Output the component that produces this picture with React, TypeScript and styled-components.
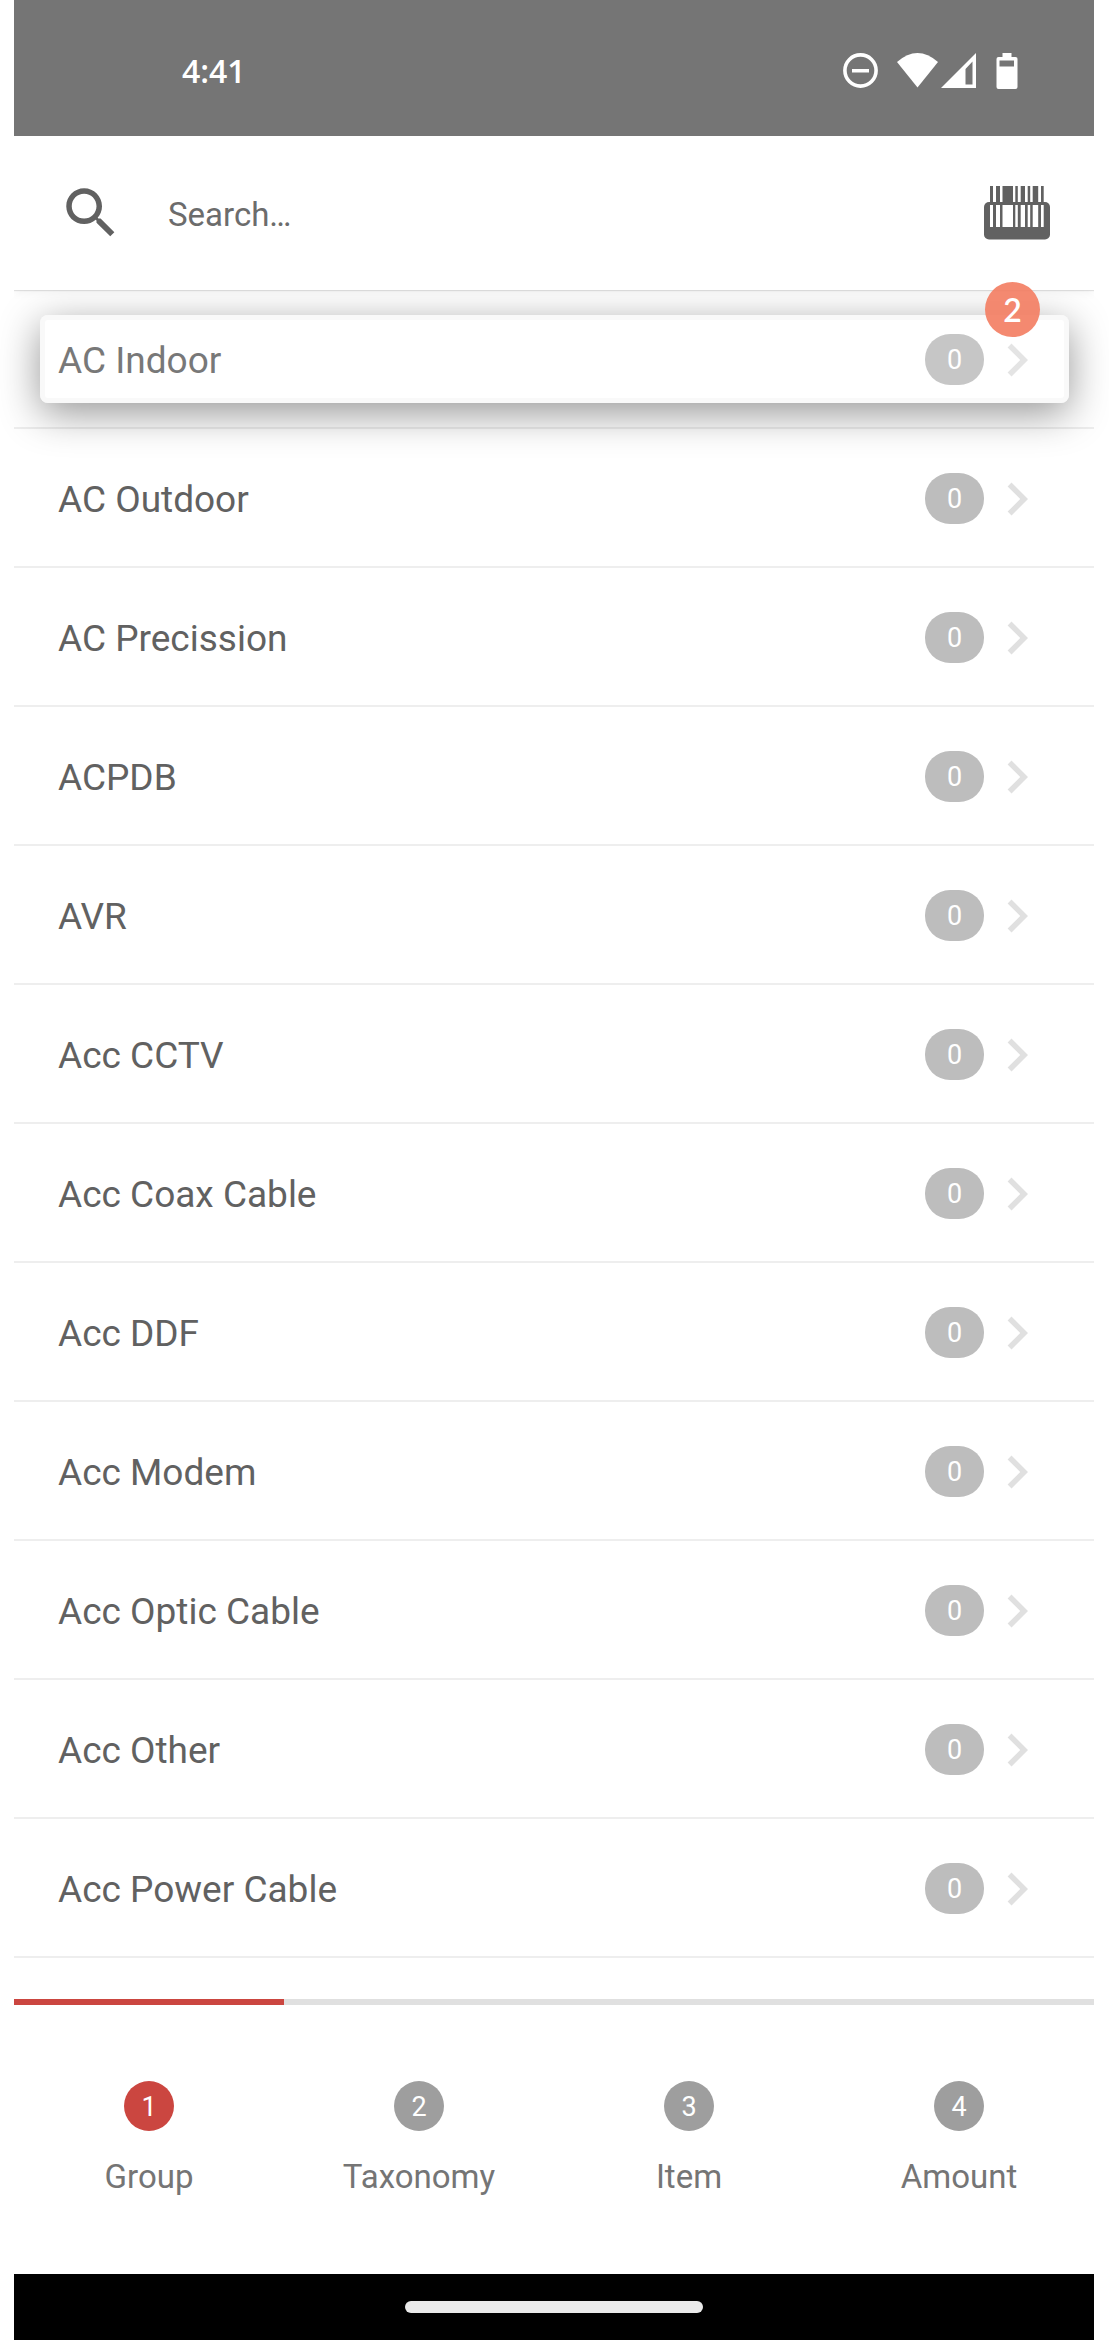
import React from "react";
import styled, { createGlobalStyle } from "styled-components";

const GlobalStyle = createGlobalStyle`
  * { box-sizing: border-box; }
  body { margin: 0; background: #fff; font-family: Roboto, sans-serif; }
  button, input { font: inherit; border: 0; background: none; padding: 0; margin: 0; }
  ul, ol { list-style: none; margin: 0; padding: 0; }
`;

const Screen = styled.div`
  display: flex;
  flex-direction: column;
  min-height: 100vh;
  margin: 0 15px 0 14px;
  background: #fff;
`;

const StatusBar = styled.header`
  display: flex;
  align-items: center;
  justify-content: space-between;
  height: 136px;
  padding: 5px 75px 0 168px;
  background: #757575;
  color: #fff;
`;

const Clock = styled.time`
  font: 600 32px/44px "Open Sans", sans-serif;
`;

const StatusIcons = styled.svg`
  display: block;
  width: 176px;
  height: 36px;
  fill: #fff;
`;

const SearchBar = styled.form`
  position: relative;
  z-index: 1;
  display: flex;
  align-items: center;
  height: 154px;
  padding: 0 44px;
  background: #fff;
  color: #616161;
  box-shadow: 0 1px 1px rgba(0, 0, 0, 0.1), 0 2px 10px rgba(0, 0, 0, 0.06);
  clip-path: inset(0 0 -16px 0);
`;

const Icon = styled.svg`
  display: block;
  flex: none;
  width: 66px;
  height: 66px;
  fill: currentColor;
`;

const SearchInput = styled.input`
  flex: 1;
  min-width: 0;
  margin-left: 44px;
  padding-top: 2px;
  height: 66px;
  font-size: 33px;
  color: #616161;
  outline: 0;
  &::placeholder { color: #6c6c6c; opacity: 1; }
`;

const IconButton = styled.button`
  color: #616161;
`;

const List = styled.ul`
  flex: 1;
`;

const Item = styled.li`
  position: relative;
  border-bottom: 2px solid #eee;
`;

const ItemButton = styled.button`
  display: flex;
  align-items: center;
  width: 100%;
  height: 137px;
  padding: 2px 44px 0;
  text-align: left;
`;

const ItemName = styled.span`
  flex: 1;
  padding-top: 2px;
  font-size: 37px;
  line-height: 44px;
  color: #616161;
`;

const Count = styled.span`
  width: 59px;
  height: 51px;
  padding-top: 1px;
  border-radius: 25px;
  background: #bdbdbd;
  color: #fff;
  font-size: 27px;
  line-height: 51px;
  text-align: center;
`;

const Chevron = styled(Icon)`
  color: #e0e0e0;
`;

const Highlight = styled.div`
  position: absolute;
  inset: 25px 25px 24px 26px;
  border: 5px solid rgba(245, 245, 245, 0.6);
  border-radius: 8px;
  background: rgba(255, 255, 255, 0.15);
  box-shadow: 0 10px 40px rgba(0, 0, 0, 0.42);
  pointer-events: none;
`;

const Marker = styled.span`
  position: absolute;
  z-index: 2;
  top: -8px;
  right: 54px;
  width: 55px;
  border-radius: 50%;
  background: rgba(243, 127, 100, 0.92);
  color: #fff;
  font: 600 32px/55px Lato, sans-serif;
  text-align: center;
`;

const Stepper = styled.footer`
  height: 275px;
`;

const Progress = styled.div`
  height: 6px;
  background: #e0e0e0;
`;

const ProgressFill = styled.div`
  height: 100%;
  background: #cb4640;
`;

const Steps = styled.ol`
  display: grid;
  grid-template-columns: repeat(4, 1fr);
  padding-top: 76px;
`;

const StepButton = styled.button`
  display: flex;
  flex-direction: column;
  align-items: center;
  gap: 26px;
  width: 100%;
  color: #757575;
  font-size: 33px;
  line-height: 40px;
`;

const StepNumber = styled.span<{ $active: boolean }>`
  width: 50px;
  height: 50px;
  padding-top: 1px;
  border-radius: 50%;
  background: ${(p) => (p.$active ? "#cb4640" : "#9e9e9e")};
  color: #fff;
  font-size: 27px;
  line-height: 50px;
  text-align: center;
`;

const GestureBar = styled.div`
  display: flex;
  align-items: center;
  justify-content: center;
  height: 66px;
  background: #000;
`;

const GestureHandle = styled.div`
  width: 298px;
  height: 12px;
  border-radius: 6px;
  background: #eaeaea;
`;

const groups = [
  "AC Indoor",
  "AC Outdoor",
  "AC Precission",
  "ACPDB",
  "AVR",
  "Acc CCTV",
  "Acc Coax Cable",
  "Acc DDF",
  "Acc Modem",
  "Acc Optic Cable",
  "Acc Other",
  "Acc Power Cable",
];

const steps = ["Group", "Taxonomy", "Item", "Amount"];
const currentStep = 1;

// Bars of the barcode as [x, width], repeated dark above the reader and light inside it.
const bars = [
  [6, 3],
  [12, 4],
  [18.5, 10.5],
  [31.3, 2.5],
  [36.7, 4.3],
  [43.7, 2.5],
  [48.7, 5.5],
  [57, 2.7],
];

export default function App() {
  return (
    <>
      <GlobalStyle />
      <Screen>
        <StatusBar>
          <Clock>4:41</Clock>
          <StatusIcons viewBox="0 0 176 36" aria-hidden="true">
            <circle cx="17.5" cy="17.5" r="15.6" fill="none" stroke="#fff" strokeWidth="3.6" />
            <rect x="9" y="16" width="17" height="3.5" />
            <path d="M54 9Q74.500-9 95 9L74.500 34.500Z" />
            <path fillRule="evenodd" d="M98 35L133 0V35ZM122.500 16V31.500H129.500V8.500Z" />
            <path fillRule="evenodd" d="M159.500 0h9v4h4q2 0 2 2v28q0 2-2 2h-17q-2 0-2-2v-28q0-2 2-2h4ZM156.500 7.500v6h14.500v-6Z" />
          </StatusIcons>
        </StatusBar>

        <SearchBar role="search" onSubmit={(e) => e.preventDefault()}>
          <Icon viewBox="0 0 24 24" aria-hidden="true">
            <path d="M15.500 14h-.79l-.28-.27C15.410 12.590 16 11.110 16 9.500 16 5.910 13.090 3 9.500 3S3 5.910 3 9.500 5.910 16 9.500 16c1.610 0 3.090-.59 4.230-1.570l.27.28v.79l5 4.990L20.490 19l-4.990-5zm-6 0C7.010 14 5 11.990 5 9.500S7.010 5 9.500 5 14 7.010 14 9.500 11.990 14 9.500 14z" />
          </Icon>
          <SearchInput type="text" aria-label="Search" placeholder="Search…" />
          <IconButton type="button" aria-label="Scan barcode">
            <Icon viewBox="0 0 66 66" aria-hidden="true">
              {bars.map(([x, w]) => (
                <rect key={x} x={x} y="6" width={w} height="18" />
              ))}
              <rect x="0" y="22" width="66" height="37.5" rx="5" />
              {bars.map(([x, w]) => (
                <rect key={x} x={x} y="25" width={w} height="22" fill="#fff" />
              ))}
            </Icon>
          </IconButton>
        </SearchBar>

        <List>
          {groups.map((name, i) => (
            <Item key={name}>
              <ItemButton type="button">
                <ItemName>{name}</ItemName>
                <Count>0</Count>
                <Chevron viewBox="0 0 24 24" aria-hidden="true">
                  <path d="M8.590 16.590L13.170 12 8.590 7.410 10 6l6 6-6 6z" />
                </Chevron>
              </ItemButton>
              {i === 0 && (
                <>
                  <Highlight />
                  <Marker>2</Marker>
                </>
              )}
            </Item>
          ))}
        </List>

        <Stepper>
          <Progress>
            <ProgressFill style={{ width: `${(currentStep / steps.length) * 100}%` }} />
          </Progress>
          <Steps>
            {steps.map((label, i) => (
              <li key={label}>
                <StepButton type="button" aria-current={i + 1 === currentStep ? "step" : undefined}>
                  <StepNumber $active={i + 1 === currentStep}>{i + 1}</StepNumber>
                  {label}
                </StepButton>
              </li>
            ))}
          </Steps>
        </Stepper>

        <GestureBar>
          <GestureHandle />
        </GestureBar>
      </Screen>
    </>
  );
}
